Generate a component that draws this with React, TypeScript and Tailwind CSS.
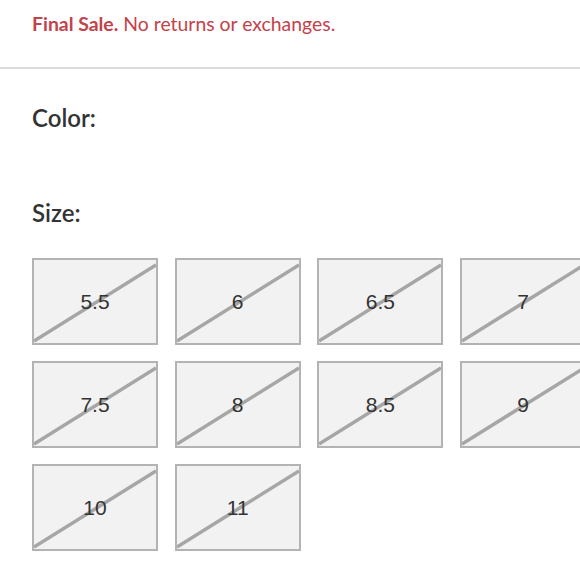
import React from 'react';

const sizes = ['5.5', '6', '6.5', '7', '7.5', '8', '8.5', '9', '10', '11'];

function SizeBox({ label }: { label: string }) {
    return (
        <div className="relative w-[126px] h-[87px] border-2 border-[#b3b3b3] bg-[#f2f2f2] flex items-center justify-center">
            <svg className="absolute inset-0 w-full h-full" viewBox="0 0 122 83" preserveAspectRatio="none">
                <line x1="0" y1="81" x2="122" y2="5" stroke="#a6a6a6" strokeWidth="3.5" />
            </svg>
            <span className="relative text-[21px] text-[#333] font-['Liberation_Sans',Arial,sans-serif] leading-none">
                {label}
            </span>
        </div>
    );
}

export default function App() {
    return (
        <div className="w-[580px] h-[580px] overflow-hidden bg-white font-['Lato',sans-serif]">
            {/* Notice */}
            <div className="pl-8 pt-[12px] h-[67px]">
                <p className="text-[19.4px] text-[#c2434a] leading-6">
                    <span className="font-bold">Final Sale.</span> No returns or exchanges.
                </p>
            </div>
            <div className="h-[2px] bg-[#dcdcdc]" />

            {/* Options */}
            <div className="pl-8">
                <h3 className="mt-[33px] text-[24px] font-semibold text-[#333] leading-8">Color:</h3>
                <h3 className="mt-[63px] text-[24px] font-semibold text-[#333] leading-8">Size:</h3>
                <div className="mt-[29px] grid grid-cols-[repeat(4,126px)] gap-x-[16.7px] gap-y-[16px] w-[640px]">
                    {sizes.map((s) => (
                        <SizeBox key={s} label={s} />
                    ))}
                </div>
            </div>
        </div>
    );
}
